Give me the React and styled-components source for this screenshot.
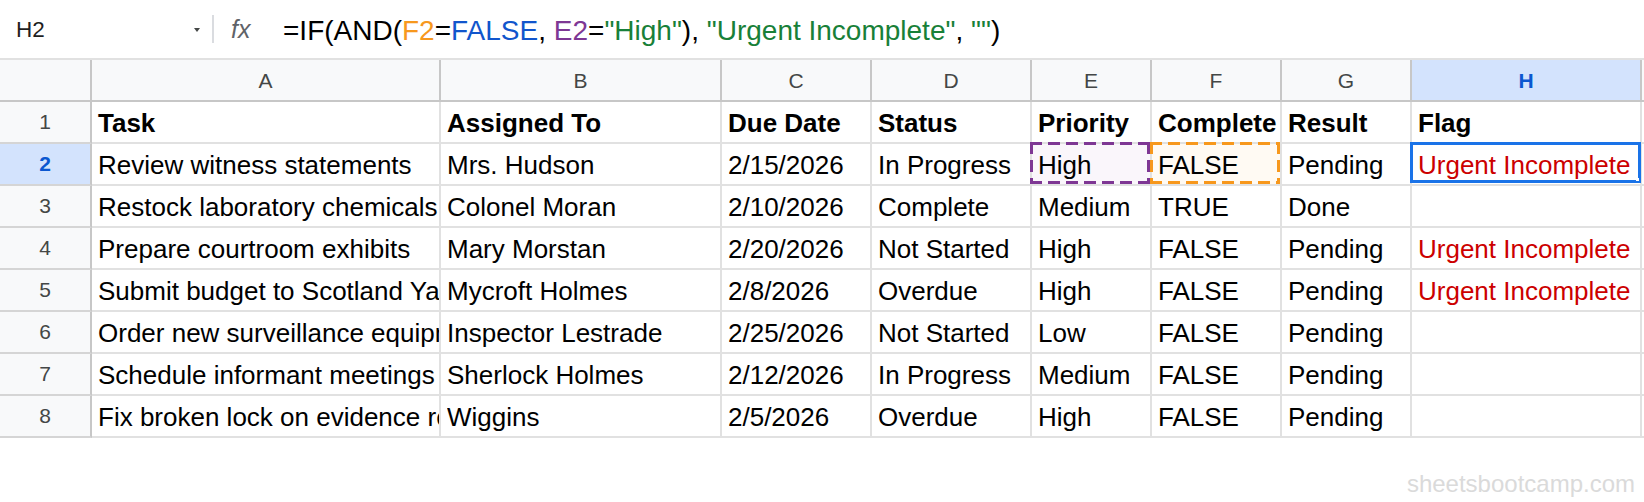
import React from 'react'
import styled, { createGlobalStyle, css } from 'styled-components'

const GlobalStyle = createGlobalStyle`
	html, body {
		margin: 0;
		padding: 0;
		background: #ffffff;
	}
	body {
		font-family: "Liberation Sans", Arial, sans-serif;
		width: 1644px;
		height: 502px;
		overflow: hidden;
	}
`

const COLUMNS = '92px 349px 281px 150px 160px 120px 130px 130px 230px 1fr'

const Page = styled.div`
	width: 1644px;
	height: 502px;
	display: flex;
	flex-direction: column;
	background: #fff;
`

const FormulaBar = styled.div`
	height: 58px;
	display: flex;
	align-items: center;
	flex-shrink: 0;
`

const NameBox = styled.div`
	width: 206px;
	box-sizing: border-box;
	padding: 2px 6px 0 16px;
	display: flex;
	align-items: center;
	justify-content: space-between;
	font-size: 22.5px;
	color: #1f1f1f;
`

const DropArrow = styled.span`
	width: 0;
	height: 0;
	border-left: 3.5px solid transparent;
	border-right: 3.5px solid transparent;
	border-top: 4px solid #444746;
`

const Divider = styled.div`
	width: 2px;
	height: 28px;
	background: #dadce0;
	margin-left: 6px;
`

const Fx = styled.span`
	font-style: italic;
	font-size: 25px;
	color: #5f6368;
	margin-left: 17px;
	width: 52px;
`

const Formula = styled.div`
	font-size: 28px;
	line-height: 58px;
	padding-top: 3px;
	color: #000;
	white-space: nowrap;
`

const Tok = styled.span`
	color: ${p => p.$c || '#000'};
`

const Grid = styled.div`
	display: grid;
	grid-template-columns: ${COLUMNS};
	grid-auto-rows: 42px;
	border-top: 2px solid #e1e1e1;
`

const headerBase = css`
	background: ${p => (p.$active ? '#d3e3fd' : '#f8f9fa')};
	color: ${p => (p.$active ? '#0b57d0' : '#444746')};
	font-weight: ${p => (p.$active ? 700 : 400)};
	font-size: 21px;
	display: flex;
	align-items: center;
	justify-content: center;
	box-sizing: border-box;
	border-right: 2px solid #c7c7c7;
	border-bottom: 2px solid #c7c7c7;
`

const ColHeader = styled.div`
	${headerBase}
	padding-top: 1px;
`

const RowHeader = styled.div`
	${headerBase}
	border-bottom-color: #d5d5d5;
`

const Corner = styled.div`
	${headerBase}
`

const Cell = styled.div`
	position: relative;
	box-sizing: border-box;
	border-right: 2px solid #e1e1e1;
	border-bottom: 2px solid #e1e1e1;
	padding: 2px 0 0 6px;
	font-size: 26px;
	line-height: 38px;
	font-weight: ${p => (p.$bold ? 700 : 400)};
	color: ${p => p.$color || '#000'};
	white-space: nowrap;
	overflow: ${p => (p.$ref || p.$selected ? 'visible' : 'hidden')};
	background: ${p => (p.$ref === 'purple' ? '#faf6fb' : p.$ref === 'orange' ? '#fffaf3' : '#fff')};

	${p => p.$ref && css`
		&::after {
			content: '';
			position: absolute;
			top: -2px;
			left: -2px;
			right: 0;
			bottom: 0;
			pointer-events: none;
			background:
				repeating-linear-gradient(90deg, ${p.$refColor} 0 12px, transparent 12px 18px) top / 100% 3px no-repeat,
				repeating-linear-gradient(90deg, ${p.$refColor} 0 12px, transparent 12px 18px) bottom / 100% 3px no-repeat,
				repeating-linear-gradient(180deg, ${p.$refColor} 0 12px, transparent 12px 18px) left / 3px 100% no-repeat,
				repeating-linear-gradient(180deg, ${p.$refColor} 0 12px, transparent 12px 18px) right / 3px 100% no-repeat;
		}
	`}

	${p => p.$selected && css`
		&::after {
			content: '';
			position: absolute;
			top: -2px;
			left: -2px;
			right: -1px;
			bottom: 1px;
			border: 3px solid #1a73e8;
			pointer-events: none;
		}
	`}
`

const CellText = styled.span`
	display: block;
	overflow: hidden;
`

const Handle = styled.span`
	position: absolute;
	right: 1px;
	bottom: 3px;
	width: 3px;
	height: 3px;
	background: #fff;
	z-index: 2;
`

const Footer = styled.div`
	display: flex;
	justify-content: flex-end;
	padding: 32px 9px 0 0;
	font-size: 24px;
	line-height: 28px;
	color: #dadada;
`

const letters = ['A', 'B', 'C', 'D', 'E', 'F', 'G', 'H']

const headers = ['Task', 'Assigned To', 'Due Date', 'Status', 'Priority', 'Complete', 'Result', 'Flag']

const rows = [
	['Review witness statements', 'Mrs. Hudson', '2/15/2026', 'In Progress', 'High', 'FALSE', 'Pending', 'Urgent Incomplete'],
	['Restock laboratory chemicals', 'Colonel Moran', '2/10/2026', 'Complete', 'Medium', 'TRUE', 'Done', ''],
	['Prepare courtroom exhibits', 'Mary Morstan', '2/20/2026', 'Not Started', 'High', 'FALSE', 'Pending', 'Urgent Incomplete'],
	['Submit budget to Scotland Yard', 'Mycroft Holmes', '2/8/2026', 'Overdue', 'High', 'FALSE', 'Pending', 'Urgent Incomplete'],
	['Order new surveillance equipment', 'Inspector Lestrade', '2/25/2026', 'Not Started', 'Low', 'FALSE', 'Pending', ''],
	['Schedule informant meetings', 'Sherlock Holmes', '2/12/2026', 'In Progress', 'Medium', 'FALSE', 'Pending', ''],
	['Fix broken lock on evidence room', 'Wiggins', '2/5/2026', 'Overdue', 'High', 'FALSE', 'Pending', ''],
]

const PURPLE = '#7e3794'
const ORANGE = '#f7981d'

const App = () => {
	return (
		<Page>
			<GlobalStyle />
			<FormulaBar>
				<NameBox>
					<span>H2</span>
					<DropArrow />
				</NameBox>
				<Divider />
				<Fx>fx</Fx>
				<Formula>
					<Tok>=IF(AND(</Tok>
					<Tok $c={ORANGE}>F2</Tok>
					<Tok>=</Tok>
					<Tok $c="#1155cc">FALSE</Tok>
					<Tok>, </Tok>
					<Tok $c={PURPLE}>E2</Tok>
					<Tok>=</Tok>
					<Tok $c="#188038">"High"</Tok>
					<Tok>), </Tok>
					<Tok $c="#188038">"Urgent Incomplete"</Tok>
					<Tok>, </Tok>
					<Tok $c="#188038">""</Tok>
					<Tok>)</Tok>
				</Formula>
			</FormulaBar>

			<Grid>
				<Corner />
				{letters.map(l => (
					<ColHeader key={l} $active={l === 'H'}>{l}</ColHeader>
				))}
				<Corner />

				<RowHeader>1</RowHeader>
				{headers.map(h => (
					<Cell key={h} $bold>{h}</Cell>
				))}
				<Cell />

				{rows.map((row, i) => {
					const n = i + 2
					return (
						<React.Fragment key={n}>
							<RowHeader $active={n === 2}>{n}</RowHeader>
							{row.map((value, j) => {
								const isE2 = n === 2 && j === 4
								const isF2 = n === 2 && j === 5
								const isH2 = n === 2 && j === 7
								return (
									<Cell
										key={j}
										$color={j === 7 ? '#cc0000' : undefined}
										$ref={isE2 ? 'purple' : isF2 ? 'orange' : undefined}
										$refColor={isE2 ? PURPLE : ORANGE}
										$selected={isH2}
									>
										<CellText>{value}</CellText>
										{isH2 && <Handle />}
									</Cell>
								)
							})}
							<Cell />
						</React.Fragment>
					)
				})}
			</Grid>

			<Footer>sheetsbootcamp.com</Footer>
		</Page>
	)
}

export default App
